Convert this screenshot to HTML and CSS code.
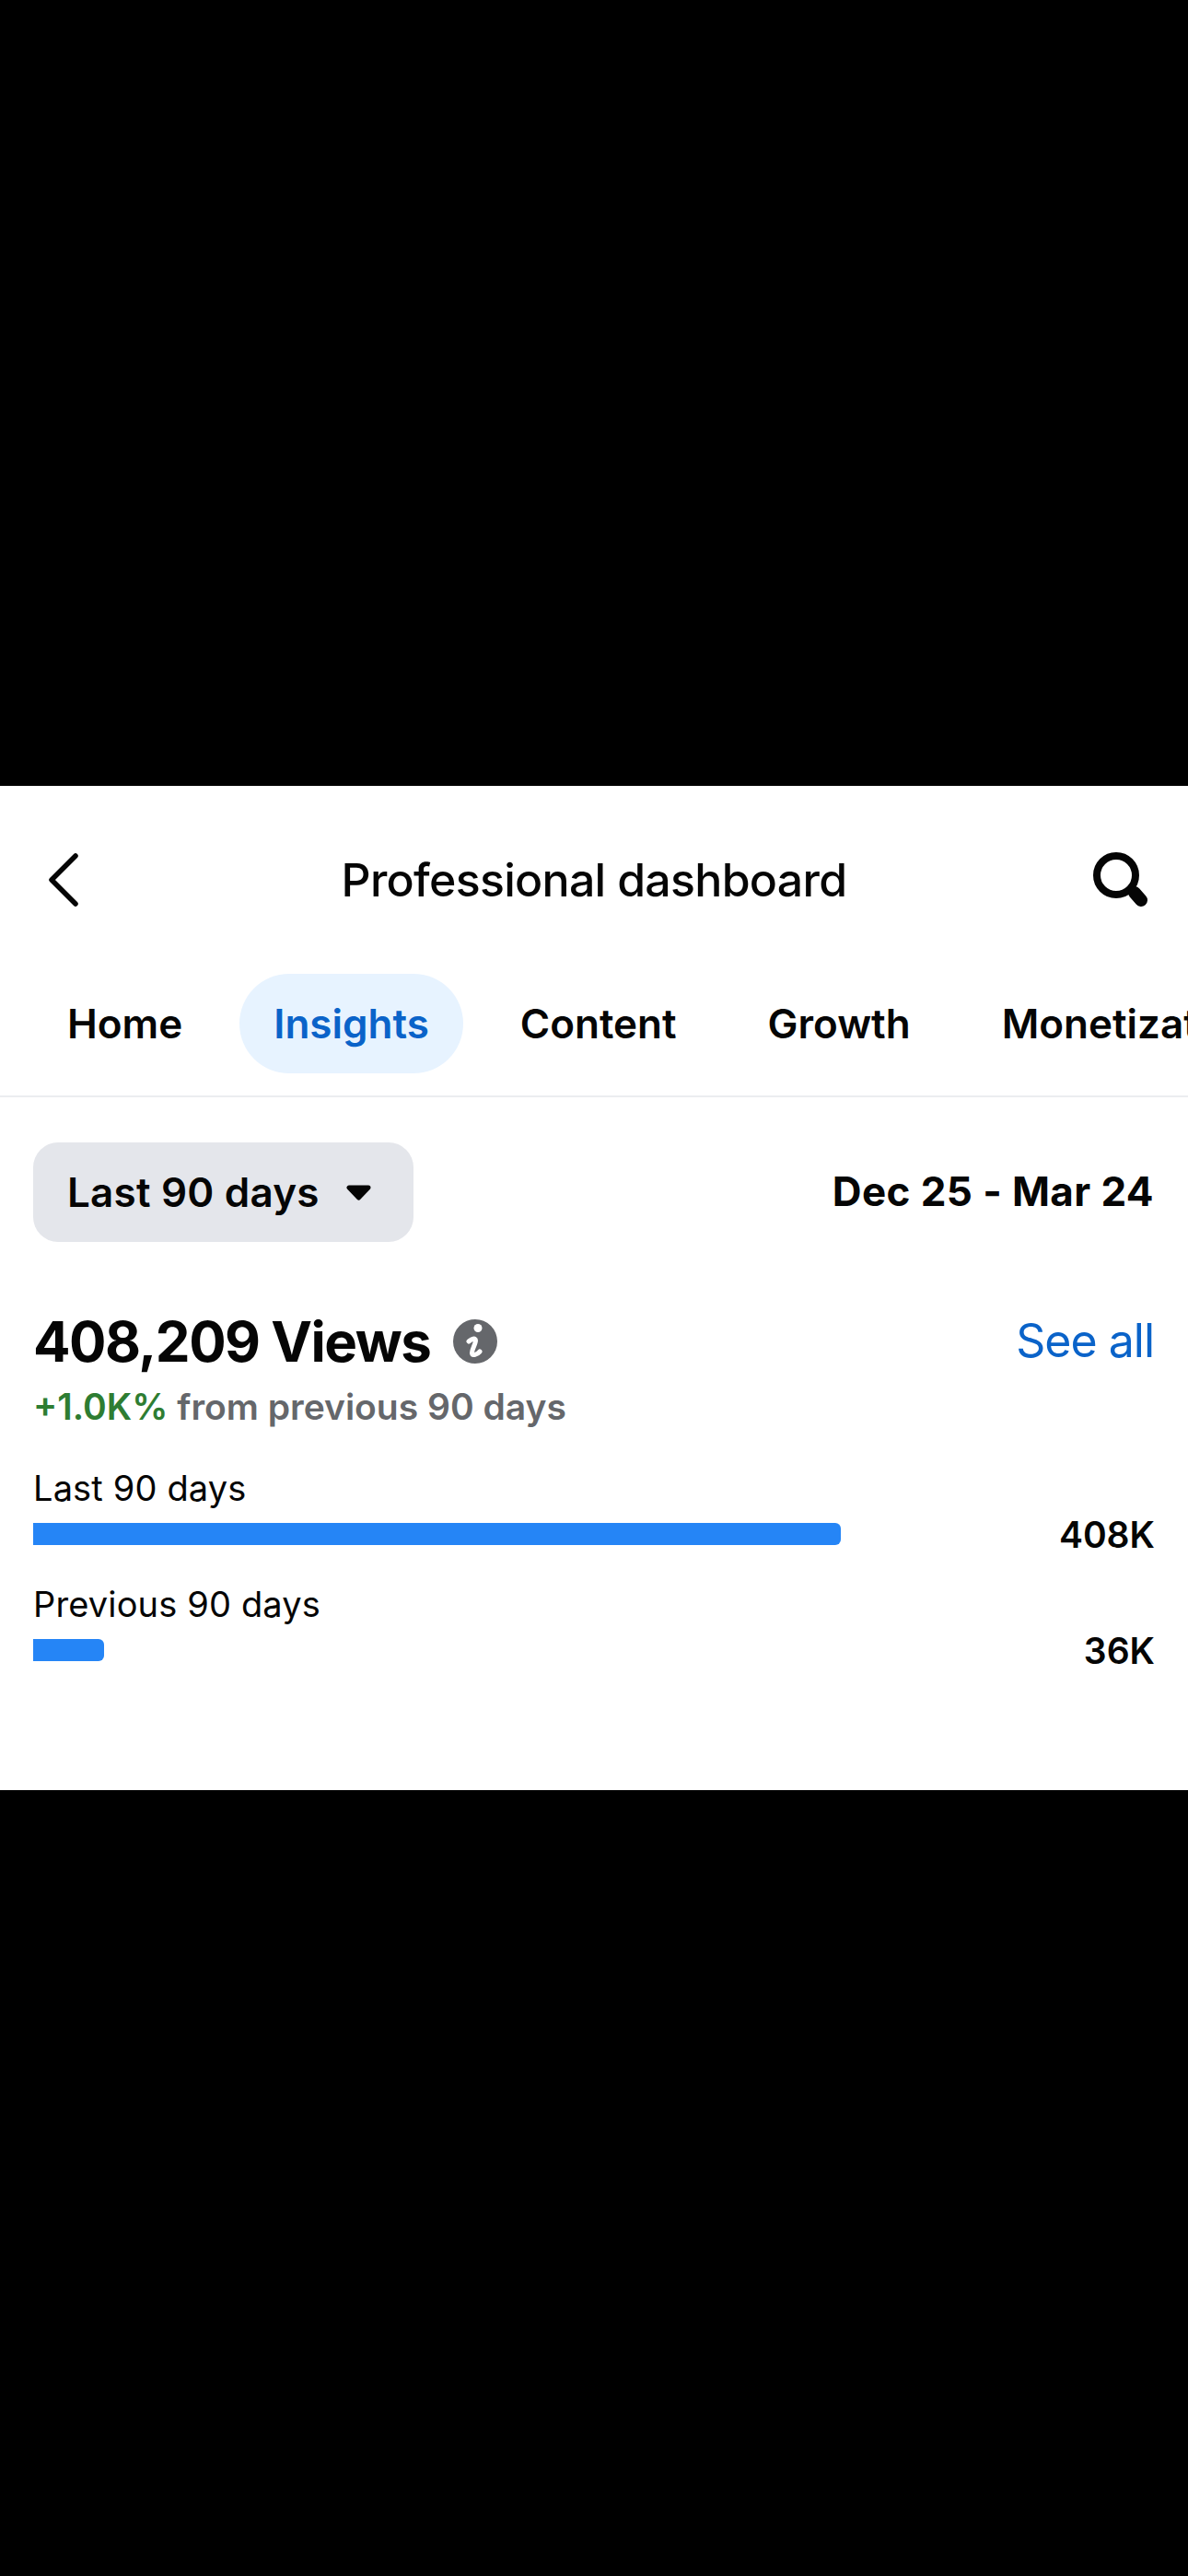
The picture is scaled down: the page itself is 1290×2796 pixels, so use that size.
FILE: index.html
```html
<!DOCTYPE html>
<html lang="en">
<head>
<meta charset="UTF-8" />
<title>Professional dashboard</title>
<link rel="stylesheet" href="styles.css">
</head>
<body>

<main class="panel">
  <header class="top-bar">
    <svg class="icon-back" width="36" height="60" viewBox="0 0 36 60" aria-label="Back">
      <polyline points="30,4 4,30 30,56" />
    </svg>
    <h1 class="title">Professional dashboard</h1>
    <svg class="icon-search" width="60" height="60" viewBox="0 0 60 60" aria-label="Search">
      <circle cx="25" cy="25" r="21" />
      <line x1="45" y1="44" x2="52" y2="52" />
    </svg>
  </header>

  <nav class="tabs">
    <a class="tab" href="#home">Home</a>
    <a class="tab active" href="#insights">Insights</a>
    <a class="tab" href="#content">Content</a>
    <a class="tab" href="#growth">Growth</a>
    <a class="tab" href="#monetization">Monetization</a>
  </nav>

  <section class="content">
    <div class="range-row">
      <button class="range-btn">
        Last 90 days
        <svg width="27" height="17" viewBox="0 0 27 17"><path d="M3 3 H24 L13.5 14 Z" /></svg>
      </button>
      <span class="range-dates">Dec 25 - Mar 24</span>
    </div>

    <div class="views-row">
      <h2 class="views">408,209 Views</h2>
      <svg class="icon-info" width="48" height="48" viewBox="0 0 48 48" aria-label="Info">
        <circle class="disc" cx="24" cy="24" r="24" />
        <circle class="dot" cx="27" cy="9.5" r="4.5" />
        <path class="stem" d="M17 24 C20 21.500 24.500 19.500 24.500 23 C24.500 27 20 33 20.500 37 C21 40 26 38.500 29 35" />
      </svg>
      <a class="see-all" href="#all">See all</a>
    </div>
    <p class="change"><span class="up">+1.0K%</span> from previous 90 days</p>

    <div class="compare">
      <div class="compare-label">Last 90 days</div>
      <div class="compare-row">
        <div class="bar" style="width: 877px"></div>
        <span class="compare-value">408K</span>
      </div>
    </div>
    <div class="compare">
      <div class="compare-label">Previous 90 days</div>
      <div class="compare-row">
        <div class="bar" style="width: 77px"></div>
        <span class="compare-value">36K</span>
      </div>
    </div>
  </section>
</main>

</body>
</html>
```

FILE: styles.css
```css
/* Reset and base */
* {
  box-sizing: border-box;
  margin: 0;
  padding: 0;
}
body {
  font-family: Inter, 'Noto Sans', sans-serif;
  background: #000;
  color: #050505;
  height: 2796px;
  overflow: hidden;
}

/* White card between the black bands */
.panel {
  margin-top: 853px;
  height: 1090px;
  background: #fff;
  overflow: hidden;
}

/* Top bar */
.top-bar {
  position: relative;
  height: 204px;
  padding: 0 43px 0 52px;
  display: flex;
  align-items: center;
  justify-content: space-between;
}
.title {
  position: absolute;
  left: 0;
  right: 0;
  text-align: center;
  font-size: 50px;
  font-weight: 500;
  line-height: 60px;
  letter-spacing: -0.7px;
}
.icon-back polyline {
  fill: none;
  stroke: #050505;
  stroke-width: 5.5;
  stroke-linecap: round;
  stroke-linejoin: round;
}
.icon-search circle {
  fill: none;
  stroke: #050505;
  stroke-width: 8;
}
.icon-search line {
  stroke: #050505;
  stroke-width: 14;
  stroke-linecap: round;
}

/* Tabs */
.tabs {
  display: flex;
  gap: 25px;
  padding: 0 0 24px 36px;
  border-bottom: 2px solid #ebedf0;
  white-space: nowrap;
  overflow: hidden;
}
.tab {
  height: 108px;
  padding: 0 37px;
  border-radius: 54px;
  display: flex;
  align-items: center;
  font-size: 44px;
  font-weight: 600;
  color: #050505;
  text-decoration: none;
}
.tab.active {
  background: #e7f3ff;
  color: #0a63c9;
}

/* Date range */
.content {
  padding: 49px 36px 0;
}
.range-row {
  display: flex;
  align-items: center;
  justify-content: space-between;
}
.range-btn {
  height: 108px;
  width: 413px;
  padding: 0 46px 0 37px;
  border: none;
  border-radius: 27px;
  background: #e4e6eb;
  display: flex;
  align-items: center;
  justify-content: space-between;
  font-family: inherit;
  font-size: 44px;
  font-weight: 600;
  letter-spacing: 0.2px;
  color: #050505;
}
.range-btn path {
  fill: #050505;
  stroke: #050505;
  stroke-width: 5;
  stroke-linejoin: round;
}
.range-dates {
  font-size: 44px;
  font-weight: 700;
  letter-spacing: 0.4px;
  margin: -2px 1px 0 0;
}

/* Views headline */
.views-row {
  margin-top: 72px;
  display: flex;
  align-items: center;
  height: 72px;
}
.views {
  font-size: 60px;
  font-weight: 700;
  line-height: 72px;
  letter-spacing: -1.5px;
}
.icon-info {
  margin-left: 25px;
}
.icon-info .disc {
  fill: #65676b;
}
.icon-info .dot {
  fill: #fff;
}
.icon-info .stem {
  fill: none;
  stroke: #fff;
  stroke-width: 5;
  stroke-linecap: round;
}
.see-all {
  margin: -2px 1px 0 auto;
  font-size: 50px;
  letter-spacing: -1px;
  color: #0a63c9;
  text-decoration: none;
}
.change {
  margin-top: 10px;
  padding-bottom: 11px;
  font-size: 39px;
  font-weight: 600;
  line-height: 50px;
  color: #65676b;
}
.up {
  color: #2e7d32;
}

/* Comparison bars */
.compare {
  margin-top: 26px;
}
.compare-label {
  font-size: 38px;
  line-height: 52px;
  letter-spacing: 0.15px;
}
.compare-row {
  height: 48px;
  display: flex;
  align-items: center;
  justify-content: space-between;
}
.bar {
  height: 24px;
  background: #2585f6;
  border-radius: 0 6px 6px 0;
}
.compare-value {
  font-size: 39px;
  font-weight: 600;
}
```
